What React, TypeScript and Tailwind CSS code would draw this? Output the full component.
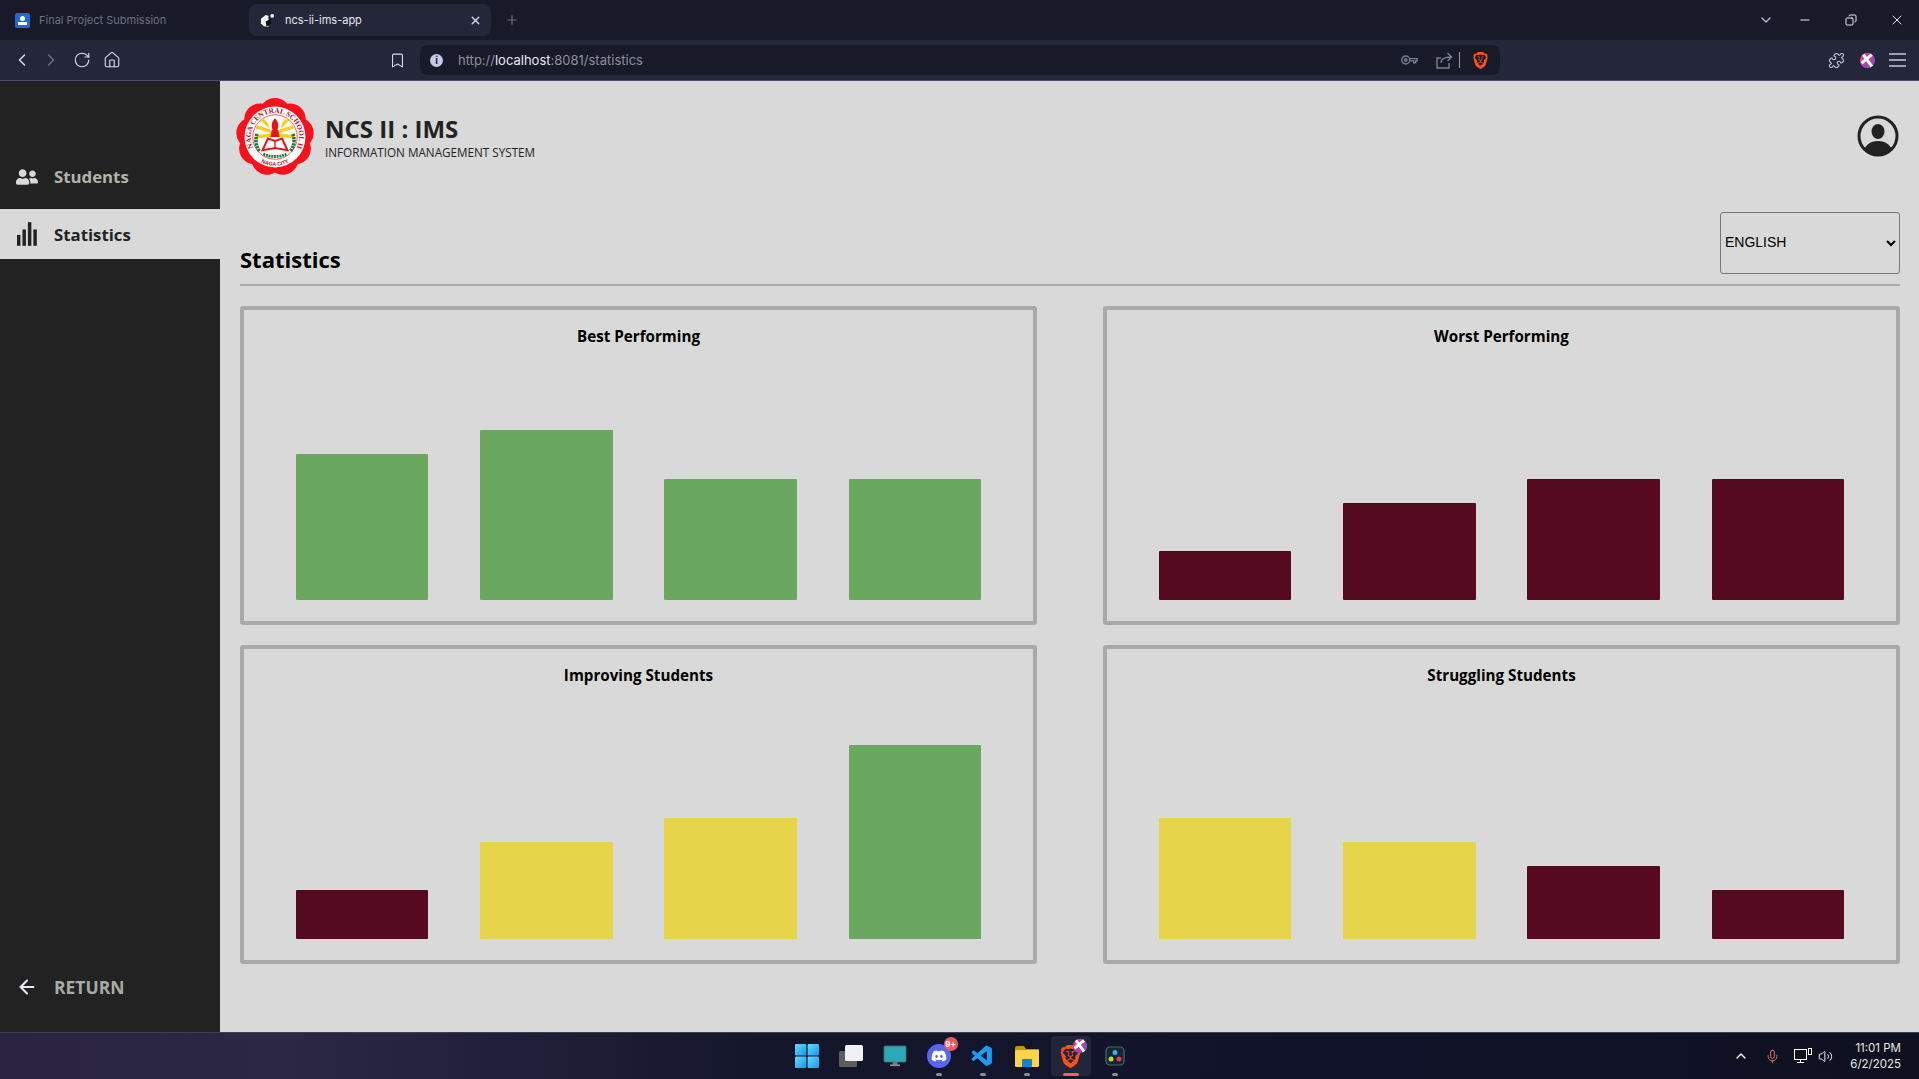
import React from 'react';
import {
  ArrowLeft,
  ChevronDown,
  ChevronLeft,
  ChevronRight,
  ChevronUp,
  Copy,
  Home,
  Bookmark,
  Mic,
  Minus,
  Plus,
  Puzzle,
  RotateCw,
  Volume2,
  X,
} from 'lucide-react';
import { FaUserFriends, FaDiscord } from 'react-icons/fa';
import { SiBrave } from 'react-icons/si';
import { VscVscode } from 'react-icons/vsc';

const GREEN = 'bg-[#6aa75f]';
const RED = 'bg-[#560a1f]';
const YELLOW = 'bg-[#e6d54a]';

// one unit of score is about 24.25px tall in the chart
const charts = [
  { title: 'Best Performing', bars: [[6, GREEN], [7, GREEN], [5, GREEN], [5, GREEN]] },
  { title: 'Worst Performing', bars: [[2, RED], [4, RED], [5, RED], [5, RED]] },
  { title: 'Improving Students', bars: [[2, RED], [4, YELLOW], [5, YELLOW], [8, GREEN]] },
  { title: 'Struggling Students', bars: [[5, YELLOW], [4, YELLOW], [3, RED], [2, RED]] },
] as { title: string; bars: [number, string][] }[];

const SchoolLogo = () => {
  const lobes = Array.from({ length: 9 }, (_, i) => (i * 360) / 9);
  return (
    <svg viewBox="0 0 100 100" className="w-[78px] h-[78px] shrink-0 -ml-[4px] -mt-[1px]">
      <defs>
        <path id="sealTop" d="M 24.6 67.8 A 31 31 0 1 1 75.4 67.8" />
        <path id="sealBottom" d="M 26.2 78.3 A 37 37 0 0 0 73.8 78.3" />
      </defs>
      {lobes.map((a) => (
        <circle key={a} cx="50" cy="20" r="20" fill="#f8111d" transform={`rotate(${a} 50 50)`} />
      ))}
      <circle cx="50" cy="50" r="45" fill="#f8111d" />
      <circle cx="50" cy="50" r="39" fill="#fff" />
      <circle cx="50" cy="50" r="28.5" fill="none" stroke="#e8141c" strokeWidth="0.9" />
      <text fontSize="9.3" fontWeight="700" fill="#a80f1a" fontFamily="Liberation Serif, serif">
        <textPath href="#sealTop" startOffset="50%" textAnchor="middle">NAGA CENTRAL SCHOOL II</textPath>
      </text>
      <text fontSize="6.8" fontWeight="700" fill="#a80f1a" fontFamily="Liberation Sans, sans-serif">
        <textPath href="#sealBottom" startOffset="50%" textAnchor="middle">NAGA CITY</textPath>
      </text>
      <g stroke="#f6cf1e" strokeWidth="4.2">
        <path d="M50 44 L26 37 M50 47 L25 50 M50 44 L33 27 M50 44 L74 37 M50 47 L75 50 M50 44 L67 27" />
      </g>
      <path d="M30 68 Q23 58 27 46 M70 68 Q77 58 73 46" fill="none" stroke="#1f7a35" strokeWidth="4.6" strokeDasharray="3 1" />
      <path d="M35 72 Q50 78 65 72" fill="none" stroke="#1f7a35" strokeWidth="3.6" strokeDasharray="2.5 1" />
      <circle cx="50" cy="35" r="8.5" fill="#fff" />
      <path d="M50 26 C45 31 45 36 47 41 L53 41 C55 36 55 31 50 26Z" fill="#e8141c" />
      <path d="M46 41 H54 L56 50 H44Z" fill="#e8141c" />
      <path d="M34 67 L41 52 L50 55 L59 52 L66 67 L50 64Z" fill="#fff" stroke="#e8141c" strokeWidth="2.6" />
      <path d="M50 55 V64" stroke="#e8141c" strokeWidth="1.8" />
    </svg>
  );
};

const AvatarIcon = () => (
  <svg viewBox="0 0 42 42" className="w-[42px] h-[42px]">
    <defs>
      <clipPath id="avatarClip">
        <circle cx="21" cy="21" r="19" />
      </clipPath>
    </defs>
    <circle cx="21" cy="21" r="19" fill="none" stroke="#222" strokeWidth="3" />
    <ellipse cx="21" cy="16.5" rx="6.5" ry="7.5" fill="#222" />
    <ellipse cx="21" cy="37" rx="14" ry="11" fill="#222" clipPath="url(#avatarClip)" />
  </svg>
);

const StatsIcon = ({ className }: { className?: string }) => (
  <svg viewBox="0 0 22 26" className={className} fill="currentColor">
    <rect x="0" y="14" width="3.8" height="12" />
    <rect x="6" y="8" width="3.8" height="18" />
    <rect x="12" y="0" width="3.8" height="26" />
    <rect x="18" y="8" width="3.8" height="18" />
  </svg>
);

const BraveMark = ({ className }: { className?: string }) => <SiBrave className={className} color="#fb5016" />;

const KExtension = ({ className }: { className?: string }) => (
  <svg viewBox="0 0 20 20" className={className}>
    <defs>
      <linearGradient id="kBall" x1="0" y1="0" x2="1" y2="1">
        <stop offset="0" stopColor="#ec3f7f" />
        <stop offset="1" stopColor="#6e4fd0" />
      </linearGradient>
    </defs>
    <circle cx="10" cy="10" r="9" fill="url(#kBall)" />
    <path d="M5 3 L15 17 M15 3 L3 13" stroke="#fff" strokeWidth="3.4" />
  </svg>
);

const KeyIcon = () => (
  <svg viewBox="0 0 18 12" className="w-[17px] h-[12px] ml-auto" fill="none" stroke="#7d8092" strokeWidth="1.4">
    <circle cx="5" cy="6" r="4.2" />
    <circle cx="5" cy="6" r="1.3" />
    <path d="M9.2 4.5 H17 V7 H15.5 V9 H13.5 V7 H9.2" />
  </svg>
);

const ShareIcon = () => (
  <svg viewBox="0 0 17 17" className="w-[17px] h-[17px] ml-[18px]" fill="none" stroke="#7d8092" strokeWidth="1.4">
    <path d="M5 6 H1 V16 H13 V11" />
    <path d="M5 11 C5 7 8 5 15 5 M11.5 1 L15.5 5 L11.5 9" />
  </svg>
);

const WindowsIcon = () => (
  <svg viewBox="0 0 24 24" className="w-[24px] h-[24px]">
    <defs>
      <linearGradient id="winTile" x1="0" y1="0" x2="1" y2="1">
        <stop offset="0" stopColor="#6fd6fb" />
        <stop offset="1" stopColor="#0f9bec" />
      </linearGradient>
    </defs>
    <rect x="0" y="0" width="11.4" height="11.4" rx="1" fill="url(#winTile)" />
    <rect x="12.6" y="0" width="11.4" height="11.4" rx="1" fill="url(#winTile)" />
    <rect x="0" y="12.6" width="11.4" height="11.4" rx="1" fill="url(#winTile)" />
    <rect x="12.6" y="12.6" width="11.4" height="11.4" rx="1" fill="url(#winTile)" />
  </svg>
);

const TaskViewIcon = () => (
  <svg viewBox="0 0 24 24" className="w-[24px] h-[24px]">
    <rect x="0" y="7" width="18" height="16" rx="1.5" fill="#5e5e5e" />
    <rect x="6" y="1" width="18" height="16" rx="1.5" fill="#f1f1f1" />
  </svg>
);

const MonitorIcon = () => (
  <svg viewBox="0 0 24 24" className="w-[24px] h-[24px]">
    <rect x="1" y="2" width="22" height="16" rx="1" fill="#2aa9b8" stroke="#56656d" strokeWidth="0.8" />
    <rect x="9.5" y="18" width="5" height="3" fill="#6b7780" />
    <rect x="7" y="20.5" width="10" height="1.6" fill="#8a949b" />
  </svg>
);

const FolderIcon = () => (
  <svg viewBox="0 0 24 24" className="w-[24px] h-[24px]">
    <path d="M0 4 Q0 2 2 2 H9 L11 5 H24 V9 H0Z" fill="#c98f12" />
    <rect x="0" y="6" width="24" height="17" rx="1.5" fill="#fbd34d" />
    <rect x="7" y="15" width="10" height="8" rx="1" fill="#1583c9" />
  </svg>
);

const ResolveIcon = () => (
  <svg viewBox="0 0 20 20" className="w-[20px] h-[20px]">
    <rect x="1" y="1" width="18" height="18" rx="4" fill="#1b2230" stroke="#3d6e73" strokeWidth="1.2" />
    <circle cx="10" cy="6.5" r="2.5" fill="#29b6e8" />
    <circle cx="6" cy="13" r="2.5" fill="#c5d82c" />
    <circle cx="14" cy="13" r="2.5" fill="#e2433b" />
  </svg>
);

// taskbar slot with the small "running" pip below the icon
const TaskItem = ({ children, running, active }: { children: React.ReactNode; running?: boolean; active?: boolean }) => (
  <div className={`relative w-[40px] h-[40px] flex items-center justify-center rounded ${active ? 'bg-[#23263a]' : ''}`}>
    {children}
    {running && (
      <span className={`absolute bottom-0 left-1/2 -translate-x-1/2 h-[3px] rounded-full ${active ? 'w-[16px] bg-[#f0616a]' : 'w-[6px] bg-[#8b8d96]'}`} />
    )}
  </div>
);

const BrowserChrome = () => (
  <div className="shrink-0 font-['Inter',sans-serif]">
    <div className="h-[40px] bg-[#181a29] flex items-center">
      <div className="w-[249px] flex items-center pl-[15px] gap-[9px] text-[11px] text-[#6d7080]">
        <span className="w-[15px] h-[15px] rounded-[2px] bg-[#2368d4] flex flex-col items-center justify-center gap-px">
          <span className="w-[5px] h-[5px] rounded-full bg-white" />
          <span className="w-[9px] h-[3px] bg-white" />
        </span>
        Final Project Submission
      </div>
      <div className="w-[242px] h-[32px] rounded-lg bg-[#24273a] flex items-center pl-[11px] pr-[9px] text-[11px] text-[#e4e6ef]">
        <svg viewBox="0 0 16 16" className="w-[15px] h-[15px] mr-[10px]">
          <path d="M1 6 L6 2 L9 3 L9 15 L4 14 L1 11Z" fill="#f2f2f2" />
          <path d="M6 9 L12 6 L12 11 L7 15Z" fill="#111" />
          <circle cx="13" cy="3" r="2" fill="#f2f2f2" />
        </svg>
        <span className="flex-1">ncs-ii-ims-app</span>
        <X className="w-[13px] h-[13px] text-[#d8dae6]" strokeWidth={2.5} />
      </div>
      <Plus className="ml-[14px] w-[14px] h-[14px] text-[#6d7080]" />
      <div className="ml-auto flex items-center text-[#e2e4ee]">
        <ChevronDown className="w-[16px] h-[16px] mr-[24px] text-[#b9bcd0]" />
        <Minus className="w-[14px] h-[14px] mr-[33px]" />
        <Copy className="w-[12px] h-[12px] mr-[32px] -scale-x-100" />
        <X className="w-[16px] h-[16px] mr-[14px]" strokeWidth={1.5} />
      </div>
    </div>
    <div className="h-[41px] bg-[#24273a] border-b border-[#4a4c62] flex items-center">
      <div className="w-[420px] flex items-center text-[#d8dbe9]">
        <ChevronLeft className="ml-[12px] w-[20px] h-[20px]" strokeWidth={1.75} />
        <ChevronRight className="ml-[9px] w-[20px] h-[20px] text-[#6d7080]" strokeWidth={1.75} />
        <RotateCw className="ml-[12px] w-[18px] h-[18px]" strokeWidth={1.5} />
        <Home className="ml-[12px] w-[18px] h-[18px]" strokeWidth={1.5} />
        <Bookmark className="ml-[268px] w-[17px] h-[17px]" strokeWidth={1.5} />
      </div>
      <div className="w-[1080px] h-[30px] rounded-lg bg-[#181a29] flex items-center pl-[10px] pr-[11px] text-[13px] text-[#8b8e9f]">
        <span className="w-[13px] h-[13px] rounded-full bg-[#c5cae6] text-[#181a29] text-[10px] font-bold leading-[13px] text-center mr-[15px]">i</span>
        <span className="pt-px">http://<span className="text-[#e4e6ef]">localhost</span>:8081/statistics</span>
        <KeyIcon />
        <ShareIcon />
        <span className="ml-[6px] w-px h-[16px] bg-[#9a9cac]" />
        <BraveMark className="ml-[12px] w-[17px] h-[17px]" />
      </div>
      <div className="flex-1 flex items-center justify-end text-[#c5cae6]">
        <Puzzle className="w-[17px] h-[17px] mr-[14px]" strokeWidth={1.5} />
        <KExtension className="w-[17px] h-[17px] mr-[13px]" />
        <div className="w-[17px] mr-[13px] flex flex-col gap-[4px]">
          <span className="h-[2px] bg-[#9c9fb5]" />
          <span className="h-[2px] bg-[#9c9fb5]" />
          <span className="h-[2px] bg-[#9c9fb5]" />
        </div>
      </div>
    </div>
  </div>
);

const Sidebar = () => (
  <aside className="w-[220px] shrink-0 bg-[#222222] flex flex-col pt-[70px] pb-[32px] font-['Open_Sans',sans-serif] font-bold text-[16.8px]">
    <div className="h-[58px] flex items-center pl-[16px] gap-[16px] pb-[6px] text-[#b3b3a8]">
      <FaUserFriends className="w-[22px] h-[22px] text-[#d9d9d9]" />
      Students
    </div>
    <div className="h-[50px] flex items-center pl-[17px] gap-[17px] pt-[2px] bg-[#d9d9d9] text-[#222222]">
      <StatsIcon className="w-[20px] h-[24px] -mt-[2px]" />
      Statistics
    </div>
    <div className="mt-auto flex items-center pl-[16px] gap-[16px] h-[26px] text-[17.5px] text-[#a7aca7]">
      <ArrowLeft className="w-[22px] h-[22px] text-[#e6eaf0]" strokeWidth={2.25} />
      RETURN
    </div>
  </aside>
);

const ChartCard = ({ title, bars }: { title: string; bars: [number, string][] }) => (
  <div className="h-[319px] border-4 border-[#a9a9a9] rounded-[3px] flex flex-col pt-[16px] pb-[21px]">
    <h3 className="text-center text-[15.2px] font-bold leading-[20px] text-black">{title}</h3>
    <div className="flex-1 flex items-end justify-evenly">
      {bars.map(([units, color], i) => (
        <div key={i} className={`w-[132.5px] rounded-[1px] ${color}`} style={{ height: Math.round(units * 24.25) }} />
      ))}
    </div>
  </div>
);

const Taskbar = () => (
  <div className="h-[47px] shrink-0 border-t border-[#3f4052] bg-[linear-gradient(90deg,#2a2440_0%,#2b2745_15%,#14162c_40%,#10132a_70%,#0f1020_100%)] flex items-center font-['Inter',sans-serif]">
    <div className="flex-1" />
    <div className="flex items-center gap-[4px] ml-[2px]">
      <TaskItem><WindowsIcon /></TaskItem>
      <TaskItem><TaskViewIcon /></TaskItem>
      <TaskItem><MonitorIcon /></TaskItem>
      <TaskItem running>
        <span className="w-[24px] h-[24px] rounded-full bg-[#5865f2] flex items-center justify-center">
          <FaDiscord className="w-[16px] h-[16px] text-white" />
        </span>
        <span className="absolute top-[1px] right-[1px] w-[14px] h-[14px] rounded-full bg-[#ec5b62] text-white text-[8px] font-bold leading-[14px] text-center">9+</span>
      </TaskItem>
      <TaskItem running><VscVscode className="w-[25px] h-[25px] text-[#1f9cf0]" /></TaskItem>
      <TaskItem running><FolderIcon /></TaskItem>
      <TaskItem running active>
        <BraveMark className="w-[23px] h-[23px]" />
        <KExtension className="absolute top-[2px] right-[3px] w-[16px] h-[16px]" />
      </TaskItem>
      <TaskItem running><ResolveIcon /></TaskItem>
    </div>
    <div className="flex-1 flex items-center justify-end text-white">
      <ChevronUp className="w-[16px] h-[16px] mr-[16px]" />
      <Mic className="w-[15px] h-[15px] mr-[14px] text-[#e9785a]" strokeWidth={1.5} />
      <svg viewBox="0 0 18 16" className="w-[18px] h-[16px] mr-[6px]" fill="none" stroke="currentColor" strokeWidth="1">
        <rect x="0.5" y="1.5" width="12" height="10" />
        <path d="M6.5 11.5 V14.5 M3 14.5 H10" />
        <rect x="14.5" y="0.5" width="3" height="6" fill="#0f1020" />
      </svg>
      <Volume2 className="w-[15px] h-[15px] mr-[17px]" strokeWidth={1.5} />
      <div className="text-[11.5px] leading-[16px] text-right mr-[18px] text-[#e6e6e6]">
        <div>11:01 PM</div>
        <div>6/2/2025</div>
      </div>
    </div>
  </div>
);

export default function App() {
  return (
    <div className="h-screen flex flex-col overflow-hidden bg-[#d9d9d9]">
      <BrowserChrome />
      <div className="flex-1 min-h-0 flex">
        <Sidebar />
        <main className="flex-1 pl-[20px] pr-[19px] pt-[17px] font-['Open_Sans',sans-serif] text-black">
          <header className="flex items-center h-[78px]">
            <SchoolLogo />
            <div className="ml-[11px]">
              <h1 className="text-[24px] leading-[30px] font-bold text-[#222222]">NCS II : IMS</h1>
              <p className="text-[11.7px] leading-[16px] text-[#222222]">INFORMATION MANAGEMENT SYSTEM</p>
            </div>
            <div className="ml-auto mr-[1px] -mt-[2px]">
              <AvatarIcon />
            </div>
          </header>
          <div className="mt-[46px] h-[64px] flex items-end justify-between border-b-2 border-[#a9a9a9]">
            <h2 className="text-[22px] leading-[32px] font-bold pb-[9px]">Statistics</h2>
            <select className="w-[180px] h-[62px] mb-[10px] pl-0 pb-[2px] bg-transparent border border-[#767676] rounded-[3px] text-[14px] font-['Liberation_Sans',sans-serif] text-black">
              <option>ENGLISH</option>
            </select>
          </div>
          <div className="mt-[20px] grid grid-cols-[797px_797px] gap-x-[66px] gap-y-[20px]">
            {charts.map((c) => (
              <ChartCard key={c.title} title={c.title} bars={c.bars} />
            ))}
          </div>
        </main>
      </div>
      <Taskbar />
    </div>
  );
}
